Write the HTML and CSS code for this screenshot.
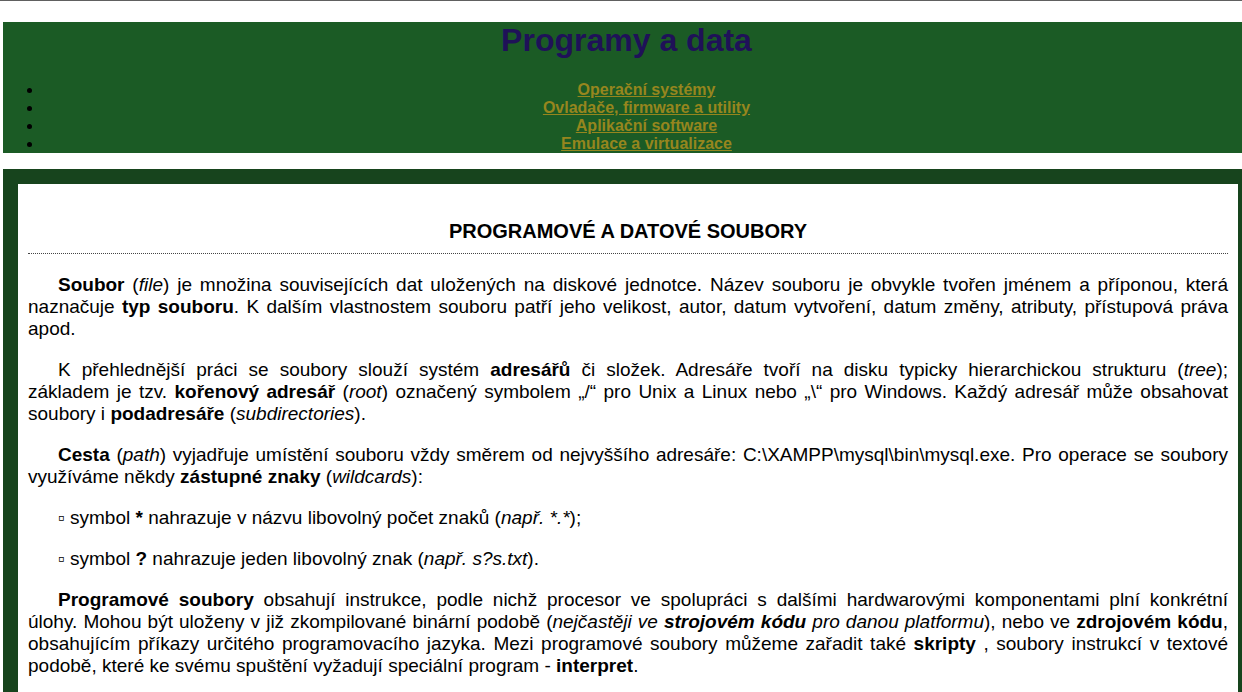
FILE: index.html
```html
<!DOCTYPE html>
<html lang="cs">
<head>
<meta charset="utf-8">
<title>Programy a data</title>
<link rel="stylesheet" href="styles.css">
</head>
<body>
<header class="top">
<h1 class="title">Programy a data</h1>
<ul class="menu">
<li><a href="#os">Operační systémy</a></li>
<li><a href="#utility">Ovladače, firmware a utility</a></li>
<li><a href="#software">Aplikační software</a></li>
<li><a href="#emulace">Emulace a virtualizace</a></li>
</ul>
</header>
<main class="frame">
<article class="article">
<h2 class="heading">PROGRAMOVÉ A DATOVÉ SOUBORY</h2>
<p><strong>Soubor</strong> (<em>file</em>) je množina souvisejících dat uložených na diskové jednotce. Název souboru je obvykle tvořen jménem a příponou, která naznačuje <strong>typ souboru</strong>. K dalším vlastnostem souboru patří jeho velikost, autor, datum vytvoření, datum změny, atributy, přístupová práva apod.</p>
<p>K přehlednější práci se soubory slouží systém <strong>adresářů</strong> či složek. Adresáře tvoří na disku typicky hierarchickou strukturu (<em>tree</em>); základem&nbsp;je&nbsp;tzv. <strong>kořenový adresář</strong> (<em>root</em>) označený symbolem „/“ pro Unix a Linux nebo „\“ pro Windows. Každý adresář může obsahovat soubory&nbsp;i&nbsp;<strong>podadresáře</strong> (<em>subdirectories</em>).</p>
<p><strong>Cesta</strong> (<em>path</em>) vyjadřuje umístění souboru vždy směrem od nejvyššího adresáře: C:\XAMPP\mysql\bin\mysql.exe. Pro operace se soubory využíváme někdy <strong>zástupné znaky</strong> (<em>wildcards</em>):</p>
<p>▫ symbol <strong>*</strong> nahrazuje v názvu libovolný počet znaků (<em>např. *.*</em>);</p>
<p>▫ symbol <strong>?</strong> nahrazuje jeden libovolný znak (<em>např. s?s.txt</em>).</p>
<p><strong>Programové soubory</strong> obsahují instrukce, podle nichž procesor ve spolupráci s dalšími hardwarovými komponentami plní konkrétní úlohy.&nbsp;Mohou být uloženy v již zkompilované binární podobě (<em>nejčastěji ve <strong>strojovém kódu</strong> pro danou platformu</em>), nebo ve <strong>zdrojovém kódu</strong>, obsahujícím příkazy určitého programovacího jazyka. Mezi programové soubory můžeme zařadit také <strong>skripty</strong> , soubory instrukcí v textové podobě, které ke svému spuštění vyžadují speciální program - <strong>interpret</strong>.</p>
</article>
</main>
</body>
</html>
```

FILE: styles.css
```css
body {
  margin: 0;
  padding-left: 3px;
  border-top: 1px solid #606060;
  overflow-x: hidden;
  background: #fff;
  color: #000;
  font-family: "Liberation Sans", Arial, sans-serif;
}

.top {
  margin: 21px -8px 16px 0;
  background: #1b5b25;
  text-align: center;
}

.title {
  margin: 0 0 22px;
  color: #1f1158;
  font-size: 32px;
  line-height: 37px;
}

.menu {
  margin: 0;
  padding-left: 40px;
  font-size: 16px;
  font-weight: bold;
  line-height: 18px;
}

.menu a {
  color: #96861e;
}

.frame {
  padding: 15px 4px 0 15px;
  background: #17441d;
}

.article {
  padding: 36px 10px 15px;
  background: #fff;
  font-size: 19px;
  line-height: 22px;
  text-align: justify;
}

.heading {
  margin: 0 0 20px;
  padding-bottom: 11px;
  border-bottom: 1px dotted #444;
  font-size: 20px;
  text-align: center;
}

.article p {
  margin: 0 0 19px;
  text-indent: 30px;
}

.article p:last-child {
  margin-bottom: 0;
}
```
